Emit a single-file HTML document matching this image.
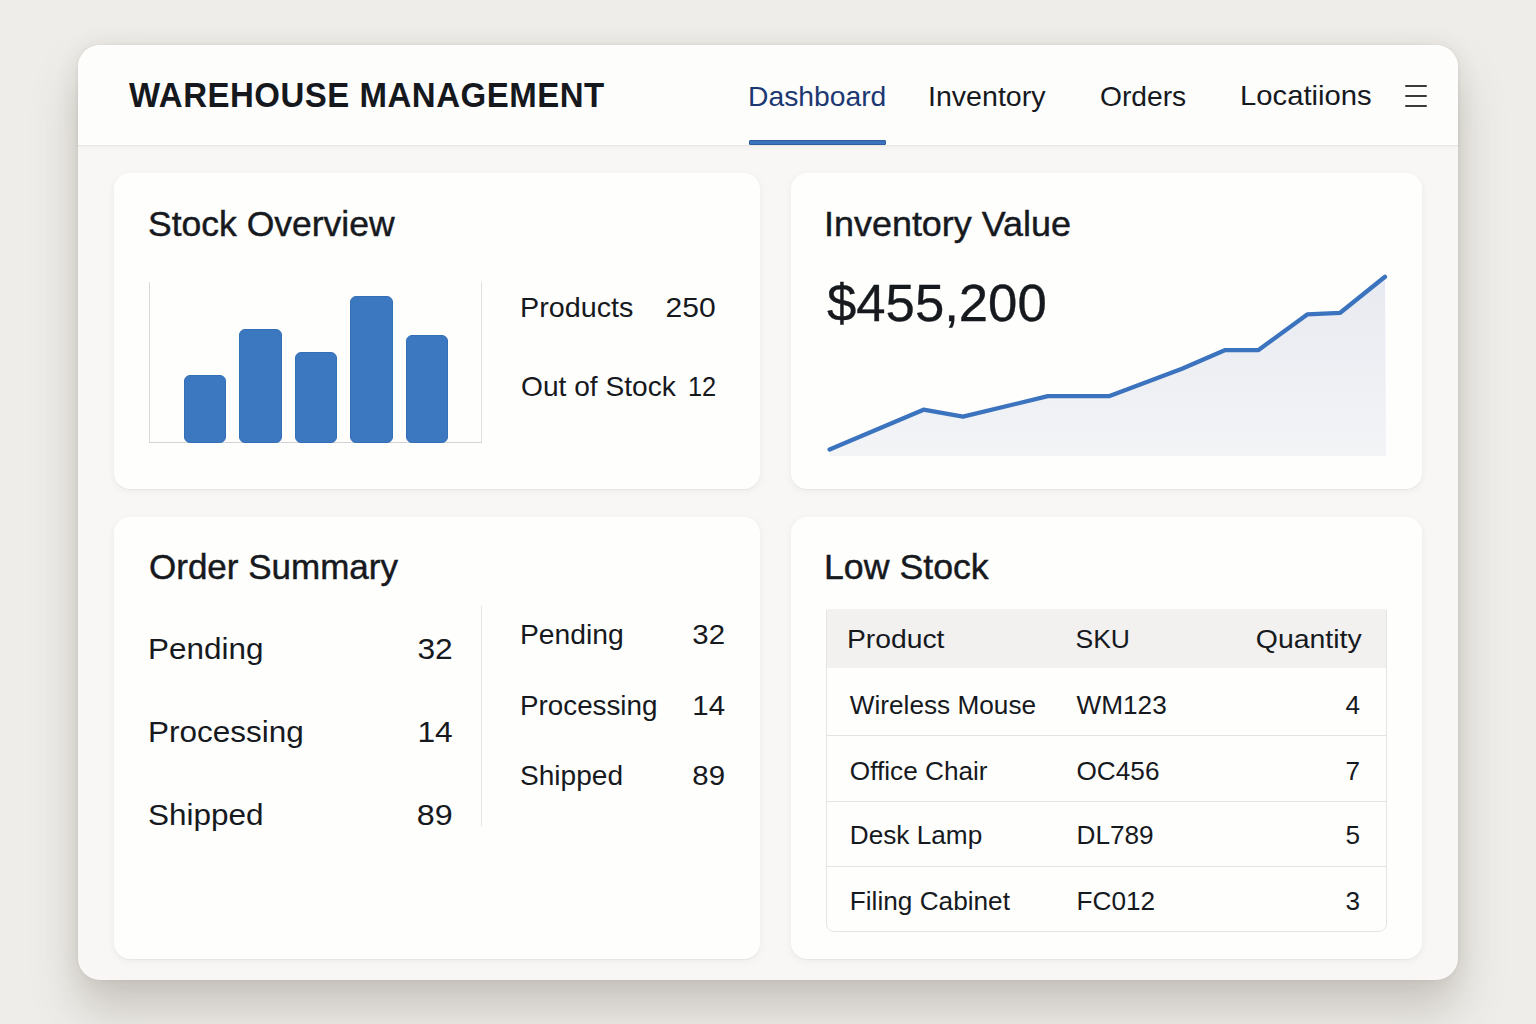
<!DOCTYPE html>
<html><head><meta charset="utf-8"><title>Warehouse Management</title>
<style>
html,body{margin:0;padding:0;}
body{width:1536px;height:1024px;position:relative;overflow:hidden;background:#eeede9;font-family:"Liberation Sans",sans-serif;}
.t{position:absolute;white-space:nowrap;}
</style></head><body>
<div style="position:absolute;left:78px;top:45px;width:1380px;height:935px;background:#f8f7f5;border-radius:22px;box-shadow:0 0 5px rgba(60,50,40,0.07),0 0 26px rgba(60,50,40,0.06),0 30px 46px rgba(95,78,72,0.25);overflow:hidden;"></div>
<div style="position:absolute;left:78px;top:45px;width:1380px;height:100px;background:#fdfdfc;border-radius:22px 22px 0 0;border-bottom:1px solid #e9e7e4;box-shadow:0 2px 4px rgba(0,0,0,0.03);"></div>
<div style="position:absolute;left:114px;top:173px;width:646px;height:316px;background:#fefefd;border-radius:16px;box-shadow:0 1px 1px rgba(0,0,0,0.04),0 2px 9px rgba(0,0,0,0.05);"></div>
<div style="position:absolute;left:791px;top:173px;width:631px;height:316px;background:#fefefd;border-radius:16px;box-shadow:0 1px 1px rgba(0,0,0,0.04),0 2px 9px rgba(0,0,0,0.05);"></div>
<div style="position:absolute;left:114px;top:517px;width:646px;height:442px;background:#fefefd;border-radius:16px;box-shadow:0 1px 1px rgba(0,0,0,0.04),0 2px 9px rgba(0,0,0,0.05);"></div>
<div style="position:absolute;left:791px;top:517px;width:631px;height:442px;background:#fefefd;border-radius:16px;box-shadow:0 1px 1px rgba(0,0,0,0.04),0 2px 9px rgba(0,0,0,0.05);"></div>
<div class="t" style="left:129.0px;top:79.3px;font-size:33px;line-height:33px;color:#15181c;font-weight:700;letter-spacing:0.50px;transform:scale(1.000,1.060);transform-origin:0 27.9px;">WAREHOUSE MANAGEMENT</div>
<div class="t" style="left:748.2px;top:82.5px;font-size:27.5px;line-height:27.5px;color:#1c3872;transform:scale(1.028,1.000);transform-origin:0 23.3px;">Dashboard</div>
<div style="position:absolute;left:749px;top:140px;width:137px;height:5px;background:#3a72bb;border:1px solid #2d5c9f;box-sizing:border-box;border-radius:1px;"></div>
<div class="t" style="left:928.3px;top:82.5px;font-size:27.5px;line-height:27.5px;color:#16191d;transform:scale(1.039,1.000);transform-origin:0 23.3px;">Inventory</div>
<div class="t" style="left:1099.5px;top:82.5px;font-size:27.5px;line-height:27.5px;color:#16191d;transform:scale(1.026,1.000);transform-origin:0 23.3px;">Orders</div>
<div class="t" style="left:1239.8px;top:82.1px;font-size:28px;line-height:28px;color:#16191d;transform:scale(1.044,1.000);transform-origin:0 23.7px;">Locatiions</div>
<div style="position:absolute;left:1405px;top:85px;width:22px;height:2px;background:#3b3b3b;border-radius:1px;"></div>
<div style="position:absolute;left:1405px;top:95px;width:22px;height:2px;background:#3b3b3b;border-radius:1px;"></div>
<div style="position:absolute;left:1405px;top:105px;width:22px;height:2px;background:#3b3b3b;border-radius:1px;"></div>
<div class="t" style="left:148.0px;top:207.3px;font-size:35.5px;line-height:35.5px;color:#16191d;-webkit-text-stroke:0.45px #16191d;">Stock Overview</div>
<div style="position:absolute;left:149px;top:282px;width:1px;height:161px;background:#d9d9d9;"></div>
<div style="position:absolute;left:481px;top:282px;width:1px;height:161px;background:#e2e2e2;"></div>
<div style="position:absolute;left:149px;top:442px;width:333px;height:1px;background:#d4d4d4;"></div>
<div style="position:absolute;left:184px;top:374.5px;width:42px;height:68.0px;background:#3b78c0;border:1px solid #3370b8;box-sizing:border-box;border-radius:6px;"></div>
<div style="position:absolute;left:239px;top:329px;width:43px;height:113.5px;background:#3b78c0;border:1px solid #3370b8;box-sizing:border-box;border-radius:6px;"></div>
<div style="position:absolute;left:295px;top:352px;width:41.5px;height:90.5px;background:#3b78c0;border:1px solid #3370b8;box-sizing:border-box;border-radius:6px;"></div>
<div style="position:absolute;left:350px;top:296px;width:43px;height:146.5px;background:#3b78c0;border:1px solid #3370b8;box-sizing:border-box;border-radius:6px;"></div>
<div style="position:absolute;left:406px;top:334.5px;width:42px;height:108.0px;background:#3b78c0;border:1px solid #3370b8;box-sizing:border-box;border-radius:6px;"></div>
<div class="t" style="left:519.8px;top:294.3px;font-size:28px;line-height:28px;color:#16191d;transform:scale(1.026,1.000);transform-origin:0 23.7px;">Products</div>
<div class="t" style="right:820.6px;text-align:right;top:294.3px;font-size:28px;line-height:28px;color:#16191d;transform:scale(1.073,1.000);transform-origin:100% 23.7px;">250</div>
<div class="t" style="left:521.3px;top:373.2px;font-size:28px;line-height:28px;color:#16191d;transform:scale(1.005,1.000);transform-origin:0 23.7px;">Out of Stock</div>
<div class="t" style="right:819.8px;text-align:right;top:373.2px;font-size:28px;line-height:28px;color:#16191d;transform:scale(0.907,1.000);transform-origin:100% 23.7px;">12</div>
<div class="t" style="left:823.6px;top:207.3px;font-size:35.5px;line-height:35.5px;color:#16191d;transform:scale(1.012,1.000);transform-origin:0 30.1px;-webkit-text-stroke:0.45px #16191d;">Inventory Value</div>
<div class="t" style="left:826.9px;top:277.2px;font-size:52px;line-height:52px;color:#16191d;transform:scale(1.013,1.000);transform-origin:0 44.0px;-webkit-text-stroke:0.35px #16191d;">$455,200</div>
<svg style="position:absolute;left:0;top:0" width="1536" height="1024" viewBox="0 0 1536 1024">
<defs><linearGradient id="g" x1="0" y1="0" x2="0" y2="1"><stop offset="0" stop-color="#e8eaf1"/><stop offset="1" stop-color="#f3f4f6"/></linearGradient></defs>
<polygon points="829.6,449.5 923.5,409.7 963,416.6 1047.8,396.2 1109.6,396 1182,368.7 1224.7,350.2 1258.2,350.2 1307.2,314.4 1340.2,312.8 1385,276.8 1386,456 829.6,456" fill="url(#g)"/>
<polyline points="829.6,449.5 923.5,409.7 963,416.6 1047.8,396.2 1109.6,396 1182,368.7 1224.7,350.2 1258.2,350.2 1307.2,314.4 1340.2,312.8 1385,276.8" fill="none" stroke="#3b73be" stroke-width="4.3" stroke-linejoin="round" stroke-linecap="round"/>
</svg>
<div class="t" style="left:149.0px;top:548.8px;font-size:35px;line-height:35px;color:#16191d;-webkit-text-stroke:0.45px #16191d;">Order Summary</div>
<div class="t" style="left:148.0px;top:633.8px;font-size:30.3px;line-height:30.3px;color:#16191d;transform:scale(1.038,1.000);transform-origin:0 25.6px;">Pending</div>
<div class="t" style="left:148.0px;top:716.8px;font-size:30.3px;line-height:30.3px;color:#16191d;transform:scale(1.039,1.000);transform-origin:0 25.6px;">Processing</div>
<div class="t" style="left:148.0px;top:799.8px;font-size:30.3px;line-height:30.3px;color:#16191d;transform:scale(1.039,1.000);transform-origin:0 25.6px;">Shipped</div>
<div class="t" style="right:1083.2px;text-align:right;top:633.8px;font-size:30.3px;line-height:30.3px;color:#16191d;transform:scale(1.048,1.000);transform-origin:100% 25.6px;">32</div>
<div class="t" style="right:1083.2px;text-align:right;top:716.8px;font-size:30.3px;line-height:30.3px;color:#16191d;transform:scale(1.048,1.000);transform-origin:100% 25.6px;">14</div>
<div class="t" style="right:1083.2px;text-align:right;top:799.8px;font-size:30.3px;line-height:30.3px;color:#16191d;transform:scale(1.065,1.000);transform-origin:100% 25.6px;">89</div>
<div style="position:absolute;left:481px;top:606px;width:1px;height:220px;background:#e3e3e3;"></div>
<div class="t" style="left:520.0px;top:621.7px;font-size:27px;line-height:27px;color:#16191d;transform:scale(1.047,1.000);transform-origin:0 22.9px;">Pending</div>
<div class="t" style="left:520.0px;top:692.8px;font-size:27px;line-height:27px;color:#16191d;transform:scale(1.029,1.000);transform-origin:0 22.9px;">Processing</div>
<div class="t" style="left:520.0px;top:763.3px;font-size:27px;line-height:27px;color:#16191d;transform:scale(1.040,1.000);transform-origin:0 22.9px;">Shipped</div>
<div class="t" style="right:811.2px;text-align:right;top:621.7px;font-size:27px;line-height:27px;color:#16191d;transform:scale(1.089,1.000);transform-origin:100% 22.9px;">32</div>
<div class="t" style="right:811.2px;text-align:right;top:692.8px;font-size:27px;line-height:27px;color:#16191d;transform:scale(1.089,1.000);transform-origin:100% 22.9px;">14</div>
<div class="t" style="right:811.2px;text-align:right;top:763.3px;font-size:27px;line-height:27px;color:#16191d;transform:scale(1.089,1.000);transform-origin:100% 22.9px;">89</div>
<div class="t" style="left:823.9px;top:548.8px;font-size:35px;line-height:35px;color:#16191d;transform:scale(1.020,1.000);transform-origin:0 29.6px;-webkit-text-stroke:0.45px #16191d;">Low Stock</div>
<div style="position:absolute;left:826px;top:609px;width:561px;height:323px;background:#fefefd;border:1px solid #e6e5e3;box-sizing:border-box;border-radius:2px 2px 8px 8px;"></div>
<div style="position:absolute;left:827px;top:609px;width:559px;height:59px;background:#f2f1f0;"></div>
<div style="position:absolute;left:827px;top:735px;width:559px;height:1px;background:#e4e3e1;"></div>
<div style="position:absolute;left:827px;top:801px;width:559px;height:1px;background:#e4e3e1;"></div>
<div style="position:absolute;left:827px;top:866px;width:559px;height:1px;background:#e4e3e1;"></div>
<div class="t" style="left:846.7px;top:625.5px;font-size:26.5px;line-height:26.5px;color:#16191d;transform:scale(1.067,1.000);transform-origin:0 22.4px;">Product</div>
<div class="t" style="left:1075.5px;top:625.5px;font-size:26.5px;line-height:26.5px;color:#16191d;">SKU</div>
<div class="t" style="right:174.4px;text-align:right;top:625.5px;font-size:26.5px;line-height:26.5px;color:#16191d;transform:scale(1.073,1.000);transform-origin:100% 22.4px;">Quantity</div>
<div class="t" style="left:849.8px;top:692.3px;font-size:26.2px;line-height:26.2px;color:#16191d;">Wireless Mouse</div>
<div class="t" style="left:1076.5px;top:692.3px;font-size:26.2px;line-height:26.2px;color:#16191d;">WM123</div>
<div class="t" style="right:176.0px;text-align:right;top:692.3px;font-size:26.2px;line-height:26.2px;color:#16191d;">4</div>
<div class="t" style="left:849.8px;top:757.5px;font-size:26.2px;line-height:26.2px;color:#16191d;">Office Chair</div>
<div class="t" style="left:1076.5px;top:757.5px;font-size:26.2px;line-height:26.2px;color:#16191d;">OC456</div>
<div class="t" style="right:176.0px;text-align:right;top:757.5px;font-size:26.2px;line-height:26.2px;color:#16191d;">7</div>
<div class="t" style="left:849.8px;top:821.8px;font-size:26.2px;line-height:26.2px;color:#16191d;">Desk Lamp</div>
<div class="t" style="left:1076.5px;top:821.8px;font-size:26.2px;line-height:26.2px;color:#16191d;">DL789</div>
<div class="t" style="right:176.0px;text-align:right;top:821.8px;font-size:26.2px;line-height:26.2px;color:#16191d;">5</div>
<div class="t" style="left:849.8px;top:887.6px;font-size:26.2px;line-height:26.2px;color:#16191d;">Filing Cabinet</div>
<div class="t" style="left:1076.5px;top:887.6px;font-size:26.2px;line-height:26.2px;color:#16191d;">FC012</div>
<div class="t" style="right:176.0px;text-align:right;top:887.6px;font-size:26.2px;line-height:26.2px;color:#16191d;">3</div>
</body></html>
